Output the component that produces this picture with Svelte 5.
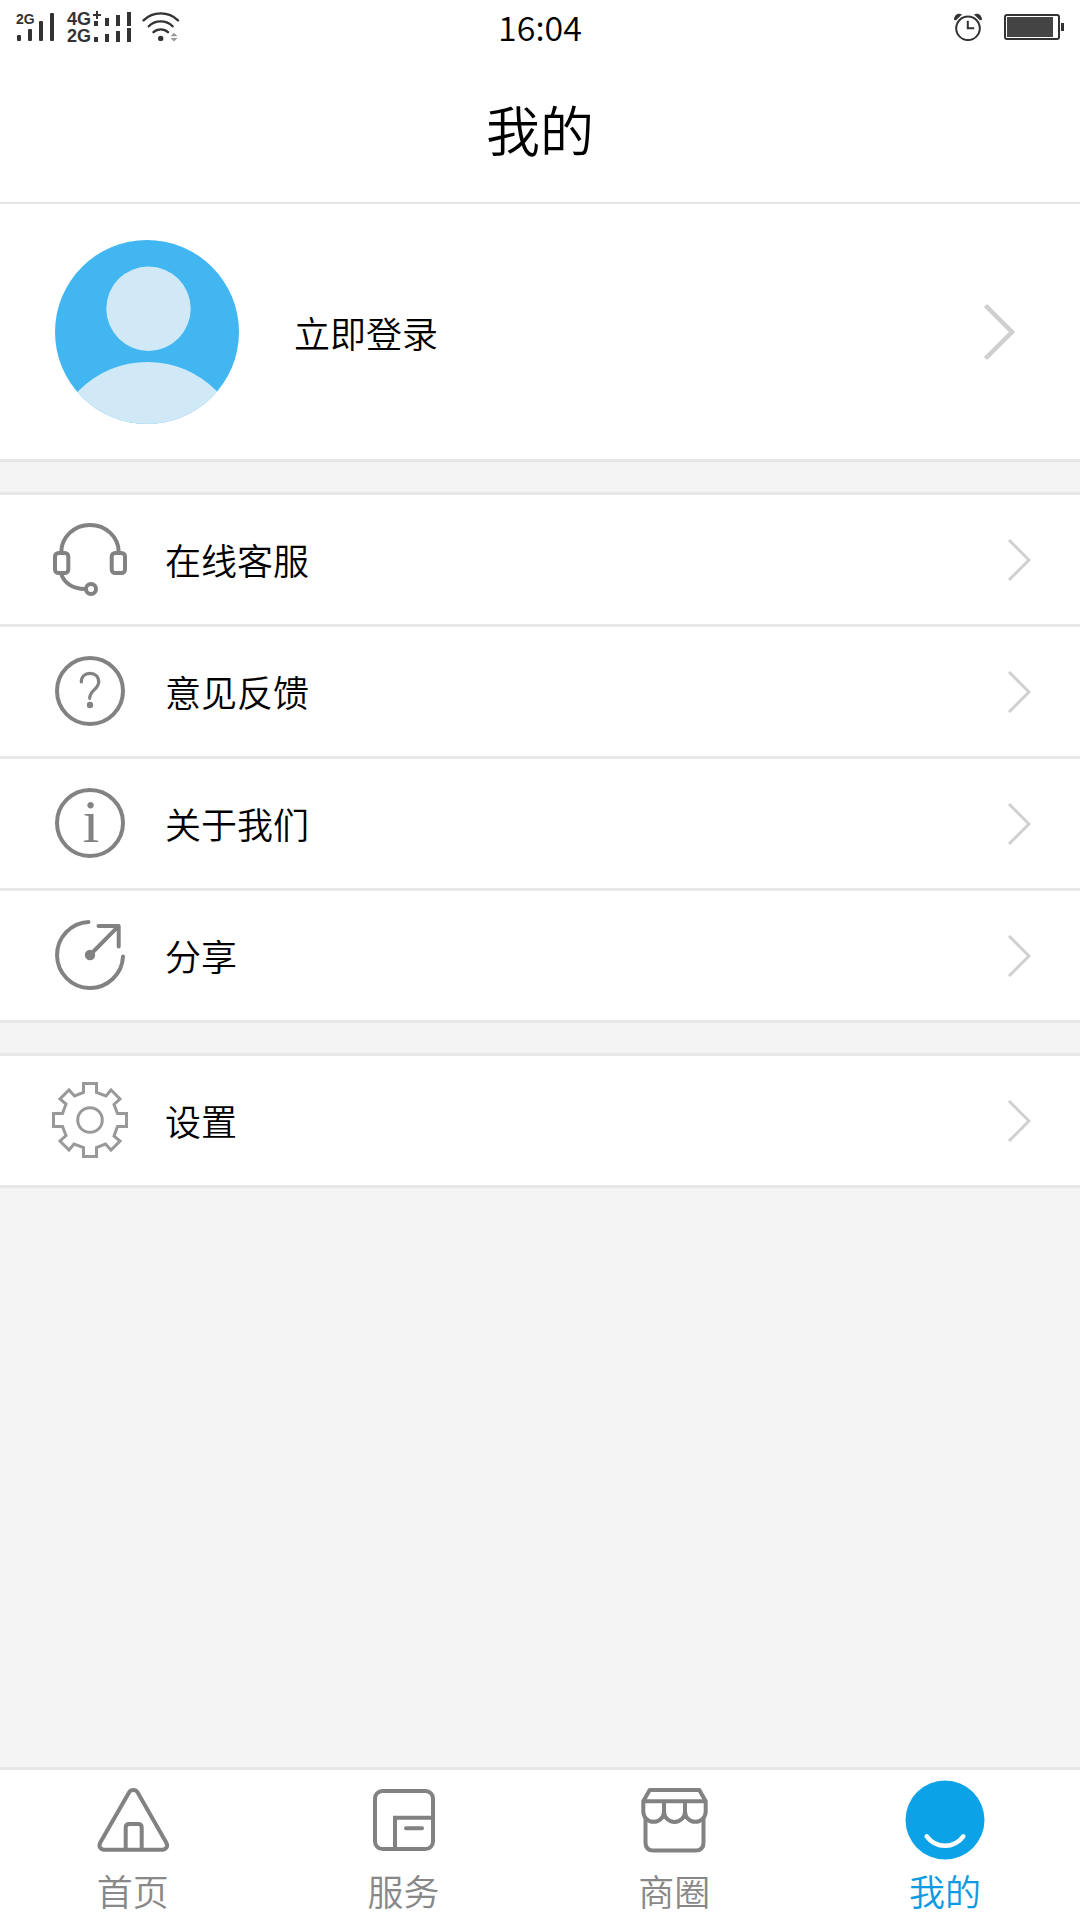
<script lang="ts">
  type MenuItem = { icon: string; label: string }

  const groups: MenuItem[][] = [
    [
      { icon: 'headset', label: '在线客服' },
      { icon: 'question', label: '意见反馈' },
      { icon: 'info', label: '关于我们' },
      { icon: 'share', label: '分享' },
    ],
    [{ icon: 'gear', label: '设置' }],
  ]

  const tabs = [
    { id: 'home', label: '首页' },
    { id: 'service', label: '服务' },
    { id: 'shop', label: '商圈' },
    { id: 'mine', label: '我的' },
  ]

  let active = $state('mine')
</script>

<div class="page">
  <div class="status">
    <svg class="signals" width="184" height="54" viewBox="0 0 184 54" aria-hidden="true">
      <g fill="#333">
        <text x="16" y="24" font-size="14">2G</text>
        <rect x="17" y="35" width="4" height="6" rx="1" />
        <rect x="28" y="29" width="4" height="12" rx="1" />
        <rect x="39" y="21" width="4" height="20" rx="1" />
        <rect x="50" y="13" width="4" height="28" rx="1" />
        <text x="67" y="25" font-size="18">4G</text>
        <text x="67" y="42" font-size="18">2G</text>
        <path d="M96 11h2v3h3v2h-3v3h-2v-3h-3v-2h3z" />
        <rect x="94" y="21" width="4" height="5" />
        <rect x="105" y="18" width="4" height="8" />
        <rect x="116" y="15" width="4" height="11" />
        <rect x="127" y="12" width="4" height="14" />
        <rect x="94" y="37" width="4" height="5" />
        <rect x="105" y="34" width="4" height="8" />
        <rect x="116" y="31" width="4" height="11" />
        <rect x="127" y="28" width="4" height="14" />
        <circle cx="160.7" cy="38.4" r="2.7" />
      </g>
      <g fill="none" stroke="#333" stroke-width="2.4" stroke-linecap="round">
        <path d="M143.5 20.3C153 11 168.5 11 178 20.3" />
        <path d="M148.8 26.3C155 19.7 166.4 19.7 172.6 26.3" />
        <path d="M153.5 32.2C157.5 28.4 164 28.4 168 32.2" />
      </g>
      <path d="M170.5 36.3l3.5-3.6 3.5 3.6zM170.5 38l3.5 3.6 3.5-3.6z" fill="#999" />
    </svg>
    <time>16:04</time>
    <div class="power">
      <svg width="28" height="28" viewBox="0 0 28 28" fill="none" stroke="#333" stroke-width="2" aria-hidden="true">
        <circle cx="14" cy="15.3" r="11.8" />
        <path d="M13.8 7.8v7.4h6.4" />
        <path d="M0 7C0 2 4-.8 8 1.6L2 7.2zM28 7C28 2 24-.8 20 1.6L26 7.2z" fill="#333" stroke="none" />
      </svg>
      <svg width="60" height="26" viewBox="0 0 60 26" aria-hidden="true">
        <rect x="1" y="1" width="54" height="24" rx="2" fill="none" stroke="#333" stroke-width="2" />
        <rect x="3" y="3" width="46" height="20" fill="#444" />
        <rect x="57" y="9" width="3" height="8" fill="#333" />
      </svg>
    </div>
  </div>

  <header>
    <h1>我的</h1>
  </header>

  <main>
    <button class="profile">
      <svg class="avatar" width="184" height="184" viewBox="0 0 184 184" aria-hidden="true">
        <rect width="184" height="184" fill="#41b6f0" />
        <circle cx="93.5" cy="68.7" r="42.2" fill="#d1e9f6" />
        <circle cx="92.5" cy="218.7" r="96.7" fill="#d1e9f6" />
      </svg>
      <span class="label">立即登录</span>
      <svg class="chevron" width="32" height="58" viewBox="0 0 32 58" aria-hidden="true">
        <path d="M2.5 2.5L29 29 2.5 55.5" stroke-width="4.5" />
      </svg>
    </button>

    {#each groups as group}
      <ul class="group">
        {#each group as item (item.icon)}
          <li>
            <button class="row">
              <svg class="icon" width="75" height="75" viewBox="0 0 75 75" aria-hidden="true">
                {#if item.icon === 'headset'}
                  <path d="M8.3 30.5V30A28.7 27 0 0 1 65.7 30V30.5" />
                  <rect x="2" y="31" width="13.3" height="20" rx="3.5" />
                  <rect x="58.7" y="31" width="13.3" height="20" rx="3.5" />
                  <path d="M8.3 52C11 61 20 67 32 67" />
                  <circle cx="38" cy="67" r="5" />
                {:else if item.icon === 'question'}
                  <circle cx="37" cy="37" r="33" />
                  <path
                    d="M28.3 28C28.3 22.5 32 19.3 37 19.3S45.7 22.5 45.7 28C45.7 35.5 36.7 36 36.7 44.3"
                    stroke-width="3.2"
                    stroke-linecap="round"
                  />
                  <circle class="solid" cx="37" cy="51" r="3.2" />
                {:else if item.icon === 'info'}
                  <circle cx="37" cy="37" r="33" />
                  <text x="38" y="56" text-anchor="middle">i</text>
                {:else if item.icon === 'share'}
                  <g stroke-linecap="round" stroke-linejoin="round">
                    <path d="M35.5 4A33 33 0 1 0 70 38.5" />
                    <path d="M45.5 8H65.7V28.5M37 37L65 8.7" />
                  </g>
                  <circle class="solid" cx="37" cy="37" r="5.2" />
                {:else}
                  <g class="fine" transform="translate(37 37)">
                    <circle r="12.3" />
                    <path
                      d="M6.5-36.5V-27.5L16-24 21-30 30-21 24-15.5 27.5-6.5H36.5V6.5H27.5L24 16 30 21 21 30 15.5 24 6.5 27.5V36.5H-6.5V27.5L-16 24-21 30-30 21-24 15.5-27.5 6.5H-36.5V-6.5H-27.5L-24-16-30-21-21-30-15.5-24-6.5-27.5V-36.5Z"
                    />
                  </g>
                {/if}
              </svg>
              <span class="label">{item.label}</span>
              <svg class="chevron" width="24" height="44" viewBox="0 0 24 44" aria-hidden="true">
                <path d="M2 2L22 22 2 42" stroke-width="3" />
              </svg>
            </button>
          </li>
        {/each}
      </ul>
    {/each}
  </main>

  <nav>
    {#each tabs as tab (tab.id)}
      <button class="tab" class:active={active === tab.id} onclick={() => (active = tab.id)}>
        <svg width="80" height="80" viewBox="0 0 80 80" aria-hidden="true">
          {#if tab.id === 'home'}
            <path
              d="M36.3 12C38 9.2 42.6 9.2 44.4 12L73.2 62.5C75.5 66.5 73 69.7 69.5 69.7H11C7.5 69.7 5.2 66.5 7.3 62.5Z"
            />
            <path d="M32.7 69.7V47.5Q32.7 44 36.2 44H45.2Q48.7 44 48.7 47.5V69.7" />
          {:else if tab.id === 'service'}
            <rect x="11" y="11" width="58" height="58" rx="7.5" />
            <path d="M31 69V37.7H69" />
            <path d="M42 48.3H58" stroke-linecap="round" />
          {:else if tab.id === 'shop'}
            <path d="M9.3 21.3L15.7 10H65.3L71.7 21.3" stroke-linejoin="round" />
            <path
              d="M9.3 21.3H71.7V31.5A10.3 10.3 0 0 1 51 31.5 10.3 10.3 0 0 1 30 31.5 10.3 10.3 0 0 1 9.3 31.5ZM30 21.3V31.5M51 21.3V31.5"
              stroke-linejoin="round"
            />
            <path d="M11.5 38V62.5Q11.5 70.5 19.5 70.5H61.5Q69.5 70.5 69.5 62.5V38" />
          {:else}
            <circle class="face" cx="40" cy="40" r="39.5" />
            <path class="smile" d="M21.7 56.3C31 68.8 49 68.8 58.3 56.3" />
          {/if}
        </svg>
        <span>{tab.label}</span>
      </button>
    {/each}
  </nav>
</div>

<style>
  :global(body) {
    margin: 0;
  }
  .page {
    display: flex;
    flex-direction: column;
    min-height: 100vh;
    background: #f4f4f4;
    color: #000;
    font-family: 'Noto Sans CJK SC', sans-serif;
    font-weight: 350;
  }
  .status {
    display: grid;
    grid-template-columns: 1fr auto 1fr;
    align-items: center;
    height: 54px;
    background: #fff;
  }
  .signals text {
    font-family: 'Liberation Sans', sans-serif;
    font-weight: 700;
  }
  time {
    font-size: 34px;
    line-height: 54px;
  }
  .power {
    display: flex;
    align-items: center;
    justify-content: flex-end;
    gap: 22px;
    padding-right: 16px;
  }
  header {
    padding-top: 2px;
    background: #fff;
    border-bottom: 2px solid #e7e7e7;
  }
  h1 {
    margin: 0;
    font-size: 54px;
    font-weight: inherit;
    line-height: 146px;
    text-align: center;
  }
  main {
    flex: 1;
  }
  button {
    display: flex;
    align-items: center;
    box-sizing: border-box;
    width: 100%;
    margin: 0;
    border: 0;
    background: #fff;
    color: inherit;
    font: inherit;
    font-size: 36px;
    line-height: 52px;
    text-align: left;
    cursor: pointer;
  }
  .label {
    flex: 1;
  }
  .profile {
    height: 258px;
    padding: 0 65px 0 55px;
    gap: 55px;
    border-bottom: 3px solid #e7e7e7;
  }
  .avatar {
    border-radius: 50%;
  }
  .group {
    margin: 30px 0 0;
    padding: 0;
    list-style: none;
    border-top: 3px solid #e7e7e7;
  }
  .row {
    height: 132px;
    padding: 0 49px 0 53px;
    gap: 37px;
    border-bottom: 3px solid #e7e7e7;
  }
  .row .label {
    padding-bottom: 2px;
  }
  .chevron {
    fill: none;
    stroke: #cfcfcf;
  }
  .icon {
    overflow: visible;
    fill: none;
    stroke: #828282;
    stroke-width: 4;
  }
  .icon .solid,
  .icon text {
    fill: #828282;
    stroke: none;
  }
  .icon text {
    font-family: 'Liberation Serif', serif;
    font-size: 61px;
    font-weight: 400;
  }
  .icon .fine {
    stroke: #999;
    stroke-width: 3;
  }
  nav {
    display: flex;
    gap: 5px;
    padding-right: 2px;
    background: #fff;
    border-top: 3px solid #e7e7e7;
  }
  .tab {
    flex: 1;
    flex-direction: column;
    gap: 4px;
    padding: 10px 0 4px;
    color: #888;
  }
  .tab svg {
    fill: none;
    stroke: #828282;
    stroke-width: 4;
  }
  .tab.active {
    color: #0c9be2;
  }
  .tab .face {
    fill: #0ca2e8;
    stroke: none;
  }
  .tab .smile {
    stroke: #fff;
    stroke-width: 4.5;
    stroke-linecap: round;
  }
</style>
